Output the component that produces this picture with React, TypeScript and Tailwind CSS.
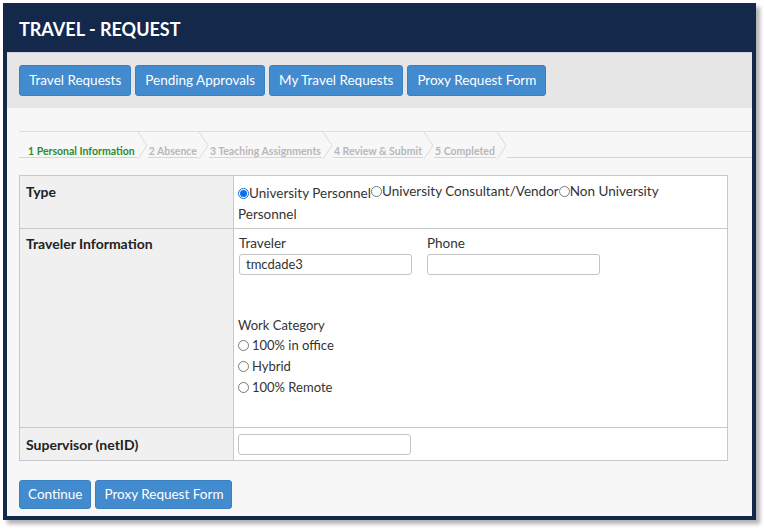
const font = { fontFamily: "Lato, 'Open Sans', sans-serif" };

const navButtons = ["Travel Requests", "Pending Approvals", "My Travel Requests", "Proxy Request Form"];

const steps = [
  { label: "1 Personal Information", active: true },
  { label: "2 Absence" },
  { label: "3 Teaching Assignments" },
  { label: "4 Review & Submit" },
  { label: "5 Completed" },
];

function Button({ children, tall }: { children: React.ReactNode; tall?: boolean }) {
  return (
    <button
      className={`${
        tall ? "h-[31px] px-[9px]" : "h-[29px] px-[8px]"
      } rounded-[3px] border border-[#3a7fc0] bg-[#428bcf] text-[13.5px] text-white`}
    >
      {children}
    </button>
  );
}

function Radio({ checked }: { checked?: boolean }) {
  return (
    <span
      className={`inline-flex h-[11px] w-[11px] shrink-0 items-center justify-center rounded-full border ${
        checked ? "border-[#0a6fe8] bg-white" : "border-[#7a7a7a] bg-white"
      }`}
    >
      {checked && <span className="h-[7px] w-[7px] rounded-full bg-[#0a6fe8]" />}
    </span>
  );
}

function Chevron() {
  return (
    <svg width="11" height="27" viewBox="0 0 11 27" className="shrink-0">
      <polyline points="1,0 10,13.5 1,27" fill="none" stroke="#dcdcdc" strokeWidth="1" />
    </svg>
  );
}

function TextInput({ value, width }: { value?: string; width: string }) {
  return (
    <div
      className={`${width} h-[21px] rounded-[3px] border border-[#c4c4c4] bg-white px-[6px] text-[13px] leading-[19px] text-[#333]`}
    >
      {value}
    </div>
  );
}

export default function App() {
  return (
    <div className="h-[529px] w-[764px] bg-white pl-[3px] pt-[3px]" style={font}>
      <div className="flex h-[517px] w-[753px] flex-col border-4 border-[#13284b] bg-[#f7f7f7] shadow-[4px_4px_4px_rgba(0,0,0,0.3)]">
        <header className="flex h-[45px] shrink-0 items-center bg-[#13284b] px-[12px]">
          <h1 className="text-[18px] font-bold text-white">TRAVEL - REQUEST</h1>
        </header>

        <nav className="flex h-[56px] shrink-0 gap-[4px] border-t border-[#cfd3d8] bg-[#e6e6e6] px-[12px] pt-[12px]">
          {navButtons.map((b) => (
            <Button key={b} tall>
              {b}
            </Button>
          ))}
        </nav>

        <div className="pl-[12px] pt-[23px]">
          <div className="flex h-[27px] border-t border-[#dedede]">
            {steps.map((s, i) => (
              <div key={s.label} className="flex">
                {i > 0 && <Chevron />}
                <div
                  className={`flex items-end border-b border-[#d6d6d6] text-[10.5px] font-bold leading-[12px] ${
                    i === 0 ? "pl-[9px] pr-[2px] text-[#2e8a2e]" : "pl-[1px] pr-[1px] text-[#b8b8b8]"
                  }`}
                >
                  {s.label}
                </div>
              </div>
            ))}
            <Chevron />
            <div className="flex-1 border-b border-[#d6d6d6]" />
          </div>
        </div>

        <div className="px-[12px] pt-[17px]">
          <table className="w-[709px] border-collapse border border-[#c8c8c8] text-[13px] text-[#333]">
            <tbody>
              <tr className="h-[53px]">
                <td className="w-[214px] border border-[#c8c8c8] bg-[#f0f0f0] px-[6px] pt-[5px] align-top text-[14px] font-bold text-[#222]">
                  Type
                </td>
                <td className="border border-[#c8c8c8] bg-white px-[4px] pt-[5px] align-top text-[13.5px] leading-[21px]">
                  <span className="inline-flex items-center">
                    <Radio checked />
                    University Personnel
                  </span>
                  <span className="inline-flex items-center">
                    <Radio />
                    University Consultant/Vendor
                  </span>
                  <span className="inline-flex items-center">
                    <Radio />
                    Non University
                  </span>
                  <br />
                  Personnel
                </td>
              </tr>
              <tr className="h-[199px]">
                <td className="border border-[#c8c8c8] bg-[#f0f0f0] px-[6px] pt-[4px] align-top text-[14px] font-bold text-[#222]">
                  Traveler Information
                </td>
                <td className="border border-[#c8c8c8] bg-white px-[4px] pt-[4px] align-top">
                  <div className="flex gap-[15px] pl-[1px]">
                    <div className="flex flex-col">
                      <span className="text-[13.5px] leading-[21px]">Traveler</span>
                      <TextInput value="tmcdade3" width="w-[173px]" />
                    </div>
                    <div className="flex flex-col">
                      <span className="text-[13.5px] leading-[21px]">Phone</span>
                      <TextInput width="w-[173px]" />
                    </div>
                  </div>
                  <div className="mt-[41px] flex flex-col leading-[21px]">
                    <span className="leading-[19px]">Work Category</span>
                    {["100% in office", "Hybrid", "100% Remote"].map((o) => (
                      <span key={o} className="flex items-center gap-[3px]">
                        <Radio />
                        {o}
                      </span>
                    ))}
                  </div>
                </td>
              </tr>
              <tr className="h-[33px]">
                <td className="border border-[#c8c8c8] bg-[#f0f0f0] px-[6px] align-middle text-[14px] font-bold text-[#222]">
                  Supervisor (netID)
                </td>
                <td className="border border-[#c8c8c8] bg-white px-[4px] align-middle">
                  <TextInput width="w-[173px]" />
                </td>
              </tr>
            </tbody>
          </table>

          <div className="mt-[19px] flex gap-[4px]">
            <Button>Continue</Button>
            <Button>Proxy Request Form</Button>
          </div>
        </div>
      </div>
    </div>
  );
}
